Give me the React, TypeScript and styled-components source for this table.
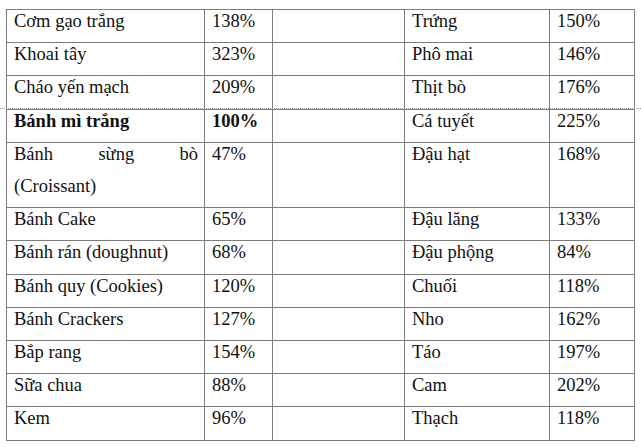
import React from 'react';
import styled, { createGlobalStyle } from 'styled-components';

const GlobalStyle = createGlobalStyle`
  html, body {
    margin: 0;
    padding: 0;
    background: #ffffff;
    font-family: "Liberation Serif", "Times New Roman", serif;
  }
`;

const Page = styled.div`
  position: relative;
  width: 641px;
  height: 447px;
  padding: 9px 0 0 6px;
  box-sizing: border-box;
  background: #ffffff;
  overflow: hidden;
  font-family: "Liberation Serif", "Times New Roman", serif;
  font-size: 18.5px;
  color: #111111;
`;

/* Word-style dotted page marker running across the sheet */
const DottedRule = styled.div<{ $top: number }>`
  position: absolute;
  left: 0;
  right: 0;
  top: ${(p) => p.$top}px;
  border-top: 1px dotted #9a9a9a;
  pointer-events: none;
`;

const Table = styled.table`
  border-collapse: collapse;
  table-layout: fixed;
  width: 628px;
  font-family: "Liberation Serif", "Times New Roman", serif;
  font-size: 18.5px;
`;

const Cell = styled.td<{ $bold?: boolean }>`
  border: 1px solid #7d7d7d;
  padding: 0 6px 0 7px;
  vertical-align: top;
  line-height: 32.2px;
  font-family: "Liberation Serif", "Times New Roman", serif;
  font-size: 18.5px;
  color: #111111;
  font-weight: ${(p) => (p.$bold ? 700 : 400)};
  text-align: justify;
`;

const Text = styled.div`
  margin: -5px 0 5px;
`;

type Item = { name: string; pct: string };

const rows: { left: Item; right: Item; bold?: boolean }[] = [
  { left: { name: 'Cơm gạo trắng', pct: '138%' }, right: { name: 'Trứng', pct: '150%' } },
  { left: { name: 'Khoai tây', pct: '323%' }, right: { name: 'Phô mai', pct: '146%' } },
  { left: { name: 'Cháo yến mạch', pct: '209%' }, right: { name: 'Thịt bò', pct: '176%' } },
  { left: { name: 'Bánh mì trắng', pct: '100%' }, right: { name: 'Cá tuyết', pct: '225%' }, bold: true },
  { left: { name: 'Bánh sừng bò (Croissant)', pct: '47%' }, right: { name: 'Đậu hạt', pct: '168%' } },
  { left: { name: 'Bánh Cake', pct: '65%' }, right: { name: 'Đậu lăng', pct: '133%' } },
  { left: { name: 'Bánh rán (doughnut)', pct: '68%' }, right: { name: 'Đậu phộng', pct: '84%' } },
  { left: { name: 'Bánh quy (Cookies)', pct: '120%' }, right: { name: 'Chuối', pct: '118%' } },
  { left: { name: 'Bánh Crackers', pct: '127%' }, right: { name: 'Nho', pct: '162%' } },
  { left: { name: 'Bắp rang', pct: '154%' }, right: { name: 'Táo', pct: '197%' } },
  { left: { name: 'Sữa chua', pct: '88%' }, right: { name: 'Cam', pct: '202%' } },
  { left: { name: 'Kem', pct: '96%' }, right: { name: 'Thạch', pct: '118%' } },
];

export default function App() {
  return (
    <>
      <GlobalStyle />
      <Page>
        <Table>
          <colgroup>
            <col style={{ width: 198 }} />
            <col style={{ width: 68 }} />
            <col style={{ width: 132 }} />
            <col style={{ width: 145 }} />
            <col style={{ width: 85 }} />
          </colgroup>
          <tbody>
            {rows.map((r) => (
              <tr key={r.left.name}>
                <Cell $bold={r.bold}>
                  <Text>{r.left.name}</Text>
                </Cell>
                <Cell $bold={r.bold}>
                  <Text>{r.left.pct}</Text>
                </Cell>
                <Cell />
                <Cell>
                  <Text>{r.right.name}</Text>
                </Cell>
                <Cell>
                  <Text>{r.right.pct}</Text>
                </Cell>
              </tr>
            ))}
          </tbody>
        </Table>
        <DottedRule $top={108} />
      </Page>
    </>
  );
}
